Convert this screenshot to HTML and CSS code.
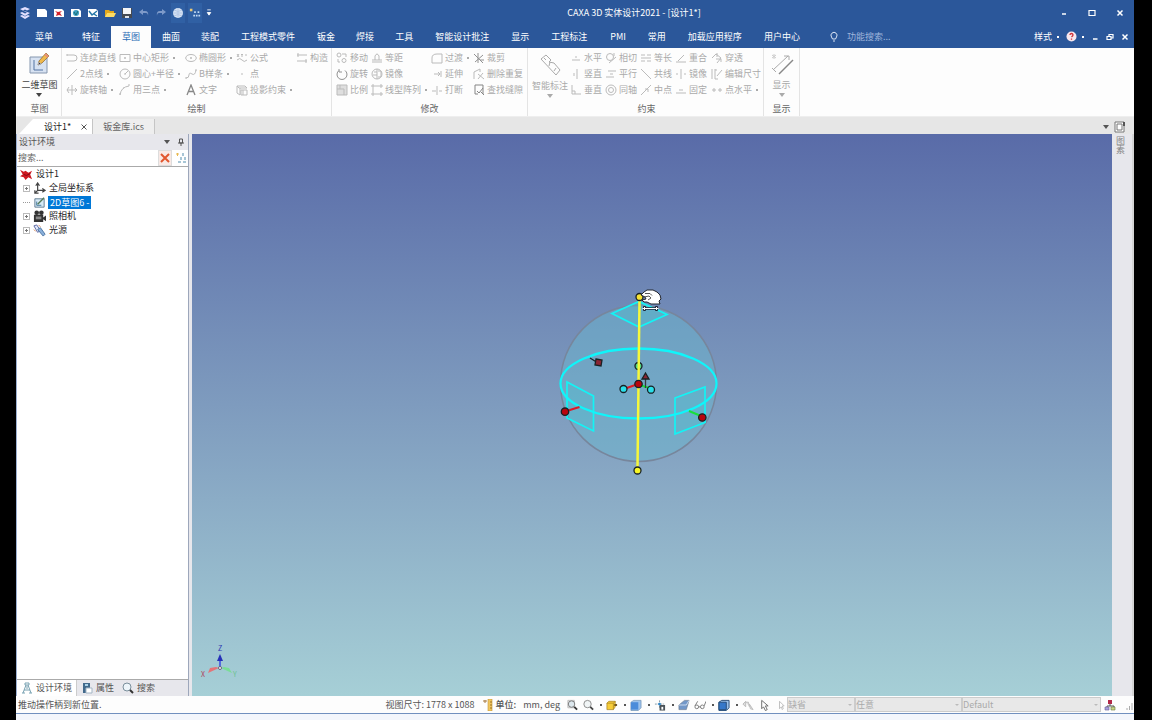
FILE: index.html
```html
<!DOCTYPE html>
<html lang="zh-CN">
<head>
<meta charset="utf-8">
<title>CAXA 3D 实体设计2021 - [设计1*]</title>
<link rel="stylesheet" href="styles.css">
</head>
<body>
<div class="app">
<header class="titlebar">
  <div class="quick">
    <svg class="logo" viewBox="0 0 12 14"><path d="M1 3l5-2 5 2-3 1.500-2-1-2 1 7 2.500-5 3L1 7l2-1 3 1.500 2-.7zM1 10l2-1 3 1.500L9 9l2 1-5 3z" fill="#e4e0ff"/></svg>
    <button aria-label="新建"><svg viewBox="0 0 12 12"><path d="M1 2h8l2 2v6H1z" fill="#fff"/></svg></button>
    <button aria-label="新建设计"><svg viewBox="0 0 12 12"><path d="M1 2h8l2 2v6H1z" fill="#fff"/><path d="M2 4l3 1 4-1-2 2 2 3-3-1-3 1 1-3z" fill="#d3222a"/></svg></button>
    <button aria-label="新建装配"><svg viewBox="0 0 12 12"><path d="M1 2h8l2 2v6H1z" fill="#fff"/><circle cx="6" cy="6" r="3" fill="#3d9fc4"/><path d="M4 5l2 3 2-4" fill="none" stroke="#1b6f71"/></svg></button>
    <button aria-label="新建图纸"><svg viewBox="0 0 12 12"><path d="M1 2h8l2 2v6H1z" fill="#fff"/><path d="M2 4l3 4 5-4M7 7l3 2" fill="none" stroke="#2678a8" stroke-width="1.500"/></svg></button>
    <button aria-label="打开"><svg viewBox="0 0 12 12"><path d="M1 3h4l1 1h4v2H3l-1 4H1z" fill="#e5a91c"/><path d="M3 6h9l-2 4H1z" fill="#ffdc63"/></svg></button>
    <button aria-label="保存"><svg viewBox="0 0 12 12"><path d="M1 1h10v10H1z" fill="#454a52"/><path d="M2 1h8v6H2z" fill="#f4f5f7"/><path d="M4 9h4v2H4z" fill="#dfe3e8"/></svg></button>
    <button aria-label="撤销"><svg viewBox="0 0 12 12"><path d="M5 2L1 5l4 3V6h3q2 0 2 3 1-5-3-5H5z" fill="#7e9ac9"/></svg></button>
    <button aria-label="重做"><svg viewBox="0 0 12 12"><path d="M7 2l4 3-4 3V6H4Q2 6 2 9 1 4 5 4h2z" fill="#7e9ac9"/></svg></button>
    <button class="lit" aria-label="三维球"><svg viewBox="0 0 12 12"><circle cx="6" cy="6" r="5" fill="#d7e3f4"/><path d="M1 6h10M6 1v10M2 3q4 3 8 0M2 9q4-3 8 0" stroke="#b4c8e6" fill="none"/></svg></button>
    <button class="lit" aria-label="设计树"><svg viewBox="0 0 14 14"><path d="M1 2h3v3H1z" fill="#edc873"/><path d="M6 5h2v2H6zM10 5h2v2h-2zM5 9h2v2H5zM8 9h2v2H8zM11 9h2v2h-2z" fill="#c3dbf4"/></svg></button>
    <button class="tiny" aria-label="自定义"><svg viewBox="0 0 6 8"><path d="M1 1h4M1 4h4L3 7z" stroke="#fff" fill="#fff"/></svg></button>
  </div>
  <h1>CAXA 3D 实体设计2021 - [设计1*]</h1>
  <div class="winbtns">
    <button aria-label="最小化"><svg viewBox="0 0 8 8"><path d="M2 5h4" stroke="#fff" stroke-width="1.500"/></svg></button>
    <button aria-label="最大化"><svg viewBox="0 0 8 8"><path d="M1 1.500h6v5H1z" fill="none" stroke="#fff" stroke-width="1.200"/></svg></button>
    <button aria-label="关闭"><svg viewBox="0 0 8 8"><path d="M1.500 1.500l5 5m0-5l-5 5" stroke="#fff" stroke-width="1.500"/></svg></button>
  </div>
</header>
<nav class="menubar">
  <div class="menus">
  <button>菜单</button><button>特征</button><button class="on">草图</button><button>曲面</button><button>装配</button><button class="wide">工程模式零件</button><button>钣金</button><button>焊接</button><button>工具</button><button class="wide">智能设计批注</button><button>显示</button><button class="wide">工程标注</button><button class="wide">PMI</button><button>常用</button><button class="wide">加载应用程序</button><button>用户中心</button>
  </div>
  <label class="find"><svg viewBox="0 0 8 12"><path d="M2.500 8Q2 7 1.500 6a3 3 0 1 1 5 0Q6 7 5.500 8zM3 10h2" fill="none" stroke="#dbe5f5"/></svg><input aria-label="功能搜索" placeholder="功能搜索..."></label>
  <div class="docbtns">
    <button class="style">样式<i class="dot"></i></button>
    <button aria-label="帮助"><svg class="help" viewBox="0 0 11 11"><circle cx="5.500" cy="5.500" r="5" fill="#f8e8ee"/><path d="M4 4q0-1.500 1.500-1.500T7 4q0 .8-1.500 2M5.500 7.500v1.200" fill="none" stroke="#d03138" stroke-width="1.300"/></svg><i class="dot"></i></button>
    <button aria-label="最小化文档"><svg viewBox="0 0 8 8"><path d="M2 6h4.500" stroke="#fff" stroke-width="1.500"/></svg></button>
    <button aria-label="还原文档"><svg viewBox="0 0 8 8"><path d="M3 3V1.500h4V5H5.500M1 3.500h4v3H1z" fill="none" stroke="#fff" stroke-width="1.200"/></svg></button>
    <button aria-label="关闭文档"><svg viewBox="0 0 8 8"><path d="M1.500 1.500l5 5m0-5l-5 5" stroke="#fff" stroke-width="1.500"/></svg></button>
  </div>
</nav>
<section class="ribbon">
  <div class="group g-sketch">
    <button class="big live"><svg viewBox="0 0 22 24"><path d="M2 5h17v16H2z" fill="#d7e2f2" stroke="#8596ae"/><path d="M6 8v10h9" fill="none" stroke="#5475a3"/><path d="M10 13l1-4 7-8 3 3-7 7z" fill="#efb94d" stroke="#8d6429" stroke-width=".7"/><path d="M17 2l3 3" stroke="#e68e7d" stroke-width="2"/><path d="M10 13l1-3 2 2z" fill="#433"/></svg>二维草图<i class="arrow"></i></button>
    <h2>草图</h2>
  </div>
  <div class="group">
    <div class="tools t-draw">
      <button><svg viewBox="0 0 12 12"><path d="M1 3h7q3 0 3 3t-3 3H1M1 2v2"/></svg>连续直线</button>
      <button><svg viewBox="0 0 12 12"><path d="M1 2.500h10v7H1zM6 5v2M5 6h2"/></svg>中心矩形<i class="dot"></i></button>
      <button><svg viewBox="0 0 12 12"><ellipse cx="6" cy="6" rx="5.300" ry="3.500"/><path d="M6 5v2M5 6h2"/></svg>椭圆形<i class="dot"></i></button>
      <button><svg viewBox="0 0 12 12"><path d="M1 2l2 3M3 2L1 5M5 2l1 1 1-1M6 3v2M9 3h2M1 8q3-3 5 0t5 0"/></svg>公式</button>
      <button><svg viewBox="0 0 12 12"><path d="M1 3h10M1 9h10M2 1v4M10 7v4"/></svg>构造</button>
      <button><svg viewBox="0 0 12 12"><path d="M1 11L11 1"/></svg>2点线<i class="dot"></i></button>
      <button><svg viewBox="0 0 12 12"><circle cx="6" cy="6" r="5"/><path d="M6 6l3-3M5 6h2"/></svg>圆心+半径<i class="dot"></i></button>
      <button><svg viewBox="0 0 12 12"><path d="M1 10q3 0 3-3t3-1 4-4M1 9v2M10 2h2"/></svg>B样条<i class="dot"></i></button>
      <button><svg viewBox="0 0 12 12"><path d="M5 6h2"/></svg>点</button>
      <span></span>
      <button><svg viewBox="0 0 12 12"><path d="M6 1v10M1 6h10M3 3L1 6l2 3M9 4l2 2-2 2"/></svg>旋转轴<i class="dot"></i></button>
      <button><svg viewBox="0 0 12 12"><path d="M1 11Q2 3 10 2M1 9v2M9 1h2M4 4h1"/></svg>用三点<i class="dot"></i></button>
      <button><svg viewBox="0 0 12 12"><path d="M2 11L6 1l4 10M3.500 7.500h5" stroke="#888" stroke-width="1.300"/></svg>文字</button>
      <button><svg viewBox="0 0 12 12"><path d="M1 2h8l2 2H3L1 2v7l3 2V4M5 6h6v5H5zM7 6v5" /></svg>投影约束<i class="dot"></i></button>
    </div>
    <h2>绘制</h2>
  </div>
  <div class="group">
    <div class="tools t-mod">
      <button><svg viewBox="0 0 12 12"><circle cx="3" cy="3" r="2"/><circle cx="8" cy="8.500" r="2"/><path d="M6 2h4v3M2 7v3h2"/></svg>移动</button>
      <button><svg viewBox="0 0 12 12"><path d="M1 10h10M1 8h3V4q2-4 4 0v4h3M4 8h4"/></svg>等距</button>
      <button><svg viewBox="0 0 12 12"><path d="M1 11V6q0-4 5-4h5v9z"/></svg>过渡<i class="dot"></i></button>
      <button><svg viewBox="0 0 12 12"><path d="M5 1v10M1 2l9 9M10 3L2 10M7 8h4" stroke="#929292"/></svg>裁剪</button>
      <button><svg viewBox="0 0 12 12"><path d="M3 2.500a5 5 0 1 0 6 0M3 1v3h3" stroke="#929292"/></svg>旋转</button>
      <button><svg viewBox="0 0 12 12"><circle cx="6" cy="6" r="5"/><path d="M6 1v10M3 4h3M2 7h4M7 3h3v6H7"/></svg>镜像</button>
      <button><svg viewBox="0 0 12 12"><path d="M3 6h6M7 4l2 2-2 2M10 3v6"/></svg>延伸</button>
      <button><svg viewBox="0 0 12 12"><path d="M1 11V4l6-3v3M5 6l6 5M10 5l-5 6"/></svg>删除重复</button>
      <button><svg viewBox="0 0 12 12"><path d="M1 1h10v10H1zM1 5h7v6M4 1v4" fill="#dedede"/></svg>比例</button>
      <button><svg viewBox="0 0 12 12"><path d="M1 1h2v2H1zM9 1h2v2H9zM1 9h2v2H1zM9 9h2v2H9zM4 2h4M2 4v4M4 10h4"/></svg>线型阵列<i class="dot"></i></button>
      <button><svg viewBox="0 0 12 12"><path d="M1 7h4M8 7h3M6 2v9"/></svg>打断</button>
      <button><svg viewBox="0 0 12 12"><path d="M2 10V1h8v9M2 10h3M4 7l2 2 4-5M8 8l3 3" stroke="#858585"/></svg>查找缝隙</button>
    </div>
    <h2>修改</h2>
  </div>
  <div class="group g-con">
    <div class="pair">
    <button class="big"><svg viewBox="0 0 24 24"><path d="M3 6l5-4 5 5-2 2 5 1 6 7-4 5L3 6zM6 5l2 2M12 9l-1 4M16 18l2-3"/></svg>智能标注<i class="arrow"></i></button>
    <div class="tools t-con">
      <button><svg viewBox="0 0 12 12"><path d="M2 8h8M5 5h2"/></svg>水平</button>
      <button><svg viewBox="0 0 12 12"><circle cx="5" cy="5" r="3.500"/><path d="M4 11l7-6M9 1v3"/></svg>相切</button>
      <button><svg viewBox="0 0 12 12"><path d="M1 3h4M7 3h4M1 6h10M1 9h4M7 9h4"/></svg>等长</button>
      <button><svg viewBox="0 0 12 12"><path d="M1 10h10M3 9l6-6"/></svg>重合</button>
      <button><svg viewBox="0 0 12 12"><path d="M1 6l4-4 5 4-4 5M6 1v4M5 7h5v3"/></svg>穿透</button>
      <button><svg viewBox="0 0 12 12"><path d="M7 1v10M4 5v3"/></svg>竖直</button>
      <button><svg viewBox="0 0 12 12"><path d="M3 3h8M1 9h8M5 6h3"/></svg>平行</button>
      <button><svg viewBox="0 0 12 12"><path d="M1 1l10 10"/></svg>共线</button>
      <button><svg viewBox="0 0 12 12"><path d="M6 1v10M2 5v2M10 5v2"/></svg>镜像</button>
      <button><svg viewBox="0 0 12 12"><path d="M1 1v10M4 1v10h3M6 8l5-6M6 2H4"/></svg>编辑尺寸</button>
      <button><svg viewBox="0 0 12 12"><path d="M2 1v9h9M2 7h3v3"/></svg>垂直</button>
      <button><svg viewBox="0 0 12 12"><circle cx="6" cy="6" r="5"/><circle cx="6" cy="6" r="2.500"/></svg>同轴</button>
      <button><svg viewBox="0 0 12 12"><path d="M1 11L11 1M5 5h3v3"/></svg>中点</button>
      <button><svg viewBox="0 0 12 12"><path d="M1 9h10M4 6h4"/></svg>固定</button>
      <button><svg viewBox="0 0 12 12"><path d="M1 6h4M7 6h4M3 4v4M9 4v4"/></svg>点水平<i class="dot"></i></button>
    </div>
    </div>
    <h2>约束</h2>
  </div>
  <div class="group g-show">
    <button class="big"><svg viewBox="0 0 24 24"><path d="M3 18L18 4M14 4h5v4M2 16l4 4" /><path d="M9 22L23 8" stroke="#888" stroke-width="1.500"/><path d="M4 2v5M2 3l4 3M6 3L2 6" stroke="#ccc"/></svg>显示<i class="arrow"></i></button>
    <h2>显示</h2>
  </div>
</section>
<div class="doctabs">
  <button class="doc on">设计1*<svg viewBox="0 0 8 8"><path d="M1.500 1.500l5 5m0-5l-5 5" stroke="#555"/></svg></button>
  <button class="doc">钣金库.ics</button>
  <button class="more" aria-label="文档列表"><i class="arrow"></i></button>
</div>
<main class="work">
  <aside class="side">
    <div class="panelhead"><h3>设计环境</h3><i class="arrow"></i><svg viewBox="0 0 8 8"><path d="M2.500 1h3v4h-3zM1 5h6M4 5v3" fill="none" stroke="#555"/></svg></div>
    <div class="search"><input aria-label="搜索设计树" placeholder="搜索..."><button class="clear" aria-label="清除"><svg viewBox="0 0 12 12"><path d="M2 2l8 8M10 2L2 10" stroke="#e2572e" stroke-width="2"/></svg></button><button aria-label="筛选"><svg viewBox="0 0 12 12"><path d="M1 2h3M2.500 1v3" stroke="#e9b950"/><path d="M7 1h2v3H7zM5 5h2v3H5zM9 5h2v3H9zM3 9h3v2H3zM8 9h3v2H8z" fill="#a8c6d6"/></svg></button></div>
    <ul class="tree">
      <li class="root"><svg viewBox="0 0 14 12"><path d="M0 1l4 2 2-1 3 2 4-2-2 4 2 5-4-2-3 3-2-3-4-1 3-2z" fill="#cf1820"/><path d="M4 6l3 1 4-2" stroke="#7d0710" fill="none"/></svg><span>设计1</span></li>
      <li><i class="plus"></i><svg viewBox="0 0 14 14"><path d="M5 10V2M3 4l2-3 2 3M5 9h7M10 7l3 2-3 2M5 9l-3 3M2 9v3h4" fill="none" stroke="#444" stroke-width="1.300"/></svg><span>全局坐标系</span></li>
      <li><i class="leaf"></i><svg viewBox="0 0 14 14"><path d="M2 3h10v9H2z" fill="#d7eaf6" stroke="#5e7990"/><path d="M4 6v4h5" fill="none" stroke="#3f7599"/><path d="M5 9l7-7" stroke="#557b59" stroke-width="1.500"/></svg><span class="sel">2D草图6 -</span></li>
      <li><i class="plus"></i><svg viewBox="0 0 14 14"><circle cx="4" cy="3" r="2.500" fill="#333"/><circle cx="9" cy="3" r="2.500" fill="#333"/><path d="M1 5h10v8H1zM11 8l3-2v6l-3-2z" fill="#333"/><path d="M3 7h6v3H3z" fill="#888"/></svg><span>照相机</span></li>
      <li><i class="plus"></i><svg viewBox="0 0 14 14"><path d="M1 2l3-1 4 6-3 2z" fill="#e4eafb" stroke="#5865a0"/><path d="M5 6l3-2 5 7-2 2z" fill="#8ab0db" stroke="#4873a1"/><path d="M1 6l2 2M6 1l2 2" stroke="#d68655"/></svg><span>光源</span></li>
    </ul>
    <div class="sidetabs">
      <button class="on"><svg viewBox="0 0 12 12"><path d="M4 1h4v2H4zM5 3L2 11M7 3l3 8M3 8h6M1 11h3M8 11h3M6 4v3" fill="none" stroke="#78a2b2"/></svg>设计环境</button>
      <button><svg viewBox="0 0 12 12"><path d="M2 1h7v10H2z" fill="#41698b"/><path d="M4 2h3v2H4z" fill="#a9d1e8"/><path d="M5 6h6v5H5z" fill="#fff" stroke="#a3b5c4"/></svg>属性</button>
      <button><svg viewBox="0 0 12 12"><circle cx="5" cy="5" r="4" fill="#edf5fa" stroke="#7b8f9c"/><path d="M8 8l3 3" stroke="#333" stroke-width="2"/></svg>搜索</button>
    </div>
  </aside>
  <div class="view">
    <svg viewBox="192 134 920 562" role="img" aria-label="三维视图">
      <circle cx="638.500" cy="383.500" r="78" fill="#6ab5ce" fill-opacity=".5" stroke="#77869c" stroke-width="1.500"/>
      <g fill="#50bfd0" fill-opacity=".4" stroke="#12f4f5" stroke-width="1.700">
        <path d="M612 313.500l27-12 28 13-28 12.500zM567 382l26.500 14V431L567 418zM675 398l30-11v35.500L675 434z"/>
      </g>
      <ellipse cx="638.500" cy="383.500" rx="78" ry="35" fill="none" stroke="#0ff5fa" stroke-width="2.300"/>
      <g stroke-width="1.300" stroke="#182124">
        <circle cx="638.500" cy="366" r="3.500" fill="#54d783"/>
        <path d="M639.500 300l-2 167" stroke="#f6f83b" stroke-width="2.500"/>
        <path d="M624 389l14-5M565 411.500l14.500-4.500" stroke="#e01926" stroke-width="2"/>
        <path d="M689 411l12 5M640 385l9 3" stroke="#19e03a" stroke-width="2"/>
        <path d="M645.500 388v-10" stroke="#333940"/>
        <path d="M642 379l3.500-6 3.500 6z" fill="#8a2534"/>
        <path d="M590 358l8 5"/><path d="M596 359l6 1-1 6-6-1z" fill="#8a2534"/>
        <circle cx="623.500" cy="389" r="3.500" fill="#29dfe9"/><circle cx="651" cy="389.700" r="3.500" fill="#29dfe9"/>
        <circle cx="638.500" cy="384" r="3.700" fill="#b9040d"/><circle cx="565" cy="411.700" r="3.700" fill="#b9040d"/><circle cx="702.300" cy="417.500" r="3.700" fill="#b9040d"/>
        <circle cx="637.500" cy="470.500" r="3.500" fill="#f7f626"/><circle cx="639.500" cy="297" r="3.500" fill="#f7e334"/>
      </g>
      <path d="M641 295l3-3 3-2h6l4 2 3 3 1 4-2 2 1 3h-9l-4-2-3 0-2-2 4-1-1-2z" fill="#fff" stroke="#23262e"/>
      <path d="M645 293.500h5l2 2M644 297l5-1 2 2-3 2" fill="none" stroke="#555"/>
      <path d="M643 308.500h15M644.500 306v5M656.500 306v5" stroke="#223" stroke-width="2.500"/><path d="M642.500 308.500h16M644.500 307v3M656.500 307v3" stroke="#fff"/>
      <g class="axes"><path d="M220 667v-8" stroke="#5369df" stroke-width="2"/><path d="M217 661l3-7 3 7z" fill="#2630b8"/><path d="M219 668l-11 5 2-5 6-1z" fill="#e47478"/><path d="M221 668l11 5-3-5-5-1z" fill="#7add96"/><circle cx="220" cy="668" r="1.500" fill="#fff" stroke="#667"/><text x="218" y="651" fill="#3038b0">Z</text><text x="201" y="677" fill="#b04860">X</text><text x="233" y="677" fill="#6cc292">Y</text></g>
    </svg>
  </div>
  <aside class="rail"><button><svg viewBox="0 0 12 12"><path d="M1 1h9v10H1zM3 3h5v6H3z" fill="#fff" stroke="#777"/><path d="M10 1v4" stroke="#555" stroke-width="2"/></svg><span>图素</span></button></aside>
</main>
<footer class="status">
  <p>推动操作柄到新位置.</p>
  <div class="stat">
    <span class="size">视图尺寸: 1778 x 1088</span>
    <svg viewBox="0 0 12 12"><path d="M6 0h4v12H6z" fill="#f1c65d" stroke="#c29335" stroke-width=".6"/><path d="M1 2h4M3 1v3" stroke="#a87b43"/><path d="M8 3h2M8 6h2M8 9h2" stroke="#9b7025"/></svg>
    <b>单位:</b><span class="unit">mm, deg</span>
    <button aria-label="缩放窗口"><svg viewBox="0 0 13 12"><path d="M2 1h7v8H2z" fill="#eee" stroke="#bbb"/><circle cx="6" cy="5" r="3.500" fill="#dce7ed" stroke="#777"/><path d="M9 8l3 3" stroke="#333" stroke-width="2"/></svg></button>
    <button aria-label="缩放"><svg viewBox="0 0 13 12"><circle cx="6" cy="5" r="4" fill="#f1f5f6" stroke="#888"/><path d="M9 8l3 3" stroke="#444" stroke-width="2"/></svg><i class="dot"></i></button>
    <button aria-label="视向"><svg viewBox="0 0 13 12"><path d="M1 4l2-2h7v6l-2 3H1z" fill="#f7ce3a" stroke="#a98420" stroke-width=".8"/><path d="M1 4h7v7M8 4l2-2" fill="none" stroke="#a98420" stroke-width=".8"/><path d="M9 6h3" stroke="#684d19" stroke-width="2"/></svg><i class="dot"></i></button>
    <button aria-label="投影"><svg viewBox="0 0 13 12"><path d="M1 3l3-2h8v8l-3 3H1z" fill="#9dc3ec" stroke="#678bae" stroke-width=".7"/><path d="M1 3h8v8H1z" fill="#4b8cda"/></svg><i class="dot"></i></button>
    <button aria-label="相机"><svg viewBox="0 0 13 12"><path d="M6 1v9M1 5h10" stroke="#7e939e" stroke-dasharray="2 1"/><path d="M6 6h6v6H6z" fill="#4b5359"/><path d="M8 8h2v3H8z" fill="#fff"/><circle cx="6" cy="5" r="1.500" fill="#2c87cc"/></svg><i class="dot"></i></button>
    <button aria-label="渲染"><svg viewBox="0 0 13 12"><path d="M1 11V6l6-5h5L9 11z" fill="#7398c9" stroke="#6a778d" stroke-width=".7"/><path d="M1 6h8l3-5" fill="none" stroke="#d4e0ef"/></svg></button>
    <button aria-label="可见性"><svg viewBox="0 0 13 12"><circle cx="3" cy="8" r="2" fill="none" stroke="#777"/><circle cx="9" cy="8" r="2" fill="none" stroke="#777"/><path d="M1 7l3-5M11 7l2-5M5 8h2" fill="none" stroke="#777"/></svg><i class="dot"></i></button>
    <button aria-label="显示样式"><svg viewBox="0 0 13 12"><path d="M1 3l3-2h8v8l-3 3H1z" fill="#9dc3ec" stroke="#234a75"/><path d="M1 3h8v8H1z" fill="#3678c9" stroke="#234a75"/></svg><i class="dot"></i></button>
    <button aria-label="拾取"><svg viewBox="0 0 13 12"><path d="M1 5l3-3v6zM4 3h3l1 5M8 5l4 6-3-1z" fill="#ddd" stroke="#bbb"/></svg></button>
    <button aria-label="选择"><svg viewBox="0 0 13 12"><path d="M4 1v9l2-2 2 4 2-1-2-4h3z" fill="#fff" stroke="#666"/></svg></button>
    <button aria-label="过滤"><svg viewBox="0 0 13 12"><path d="M6 2v8l2-2 1 3 1-1-1-3h2z" fill="#fff" stroke="#bbb"/></svg></button>
  </div>
  <div class="picks">
    <span class="pick p-a"><select disabled aria-label="拾取过滤"><option>缺省</option></select></span><span class="pick p-b"><select disabled aria-label="拾取类型"><option>任意</option></select></span><span class="pick p-c"><select disabled aria-label="配置"><option>Default</option></select></span>
    <svg viewBox="0 0 12 12"><path d="M4 1h4v4H4z" fill="#b32948"/><path d="M6 5v2M3 8V7h7v1" fill="none" stroke="#555"/><path d="M1 8h4v3H1z" fill="#a9a1dc" stroke="#655c99" stroke-width=".6"/><path d="M7 8h4v3H7z" fill="#c9d586" stroke="#687b42" stroke-width=".6"/></svg>
    <svg class="grip" viewBox="0 0 12 12"><path d="M5 9v2M7.500 7v4M10 4v7" stroke="#aaa"/></svg>
  </div>
</footer>
</div>
</body>
</html>
```
FILE: styles.css
```css
* { box-sizing: border-box; }
body, h1, h2, h3, p, ul { margin: 0; padding: 0; }
body {
  background: #000;
  padding: 0 18px 0 16px;
  font: 9px/14px "Noto Sans CJK SC", sans-serif;
  color: #444;
}
h1, h2, h3 { font-size: 9px; font-weight: 400; }
button, input, select {
  font: inherit;
  color: inherit;
  border: 0;
  padding: 0;
  margin: 0;
  background: none;
  white-space: nowrap;
}
button { display: flex; align-items: center; justify-content: center; }
svg { width: 12px; height: 12px; flex: none; }
.app { min-height: 100vh; display: flex; flex-direction: column; background: #f3f6fc; }

.dot { width: 2px; height: 2px; background: currentColor; margin-left: 5px; flex: none; }
.arrow { border: 3px solid transparent; border-top: 4px solid #555; border-bottom: 0; flex: none; }

.titlebar { position: relative; display: flex; align-items: center; justify-content: space-between; height: 25px; background: #2b579a; color: #fff; }
.quick { display: flex; align-items: center; gap: 5px; padding-left: 3px; }
.quick .logo { height: 14px; }
.quick .lit { background: #3060a4; height: 20px; margin: 0 -1px; padding: 0 1px; }
.quick .tiny svg { width: 6px; height: 7px; }
.titlebar h1 { position: absolute; left: 50%; top: 6px; transform: translateX(-50%); padding-left: 118px; white-space: nowrap; }
.winbtns { display: flex; gap: 20px; padding-right: 10px; height: 20px; align-items: center; }
.winbtns svg, .docbtns svg { width: 8px; height: 8px; }

.menubar { display: flex; align-items: stretch; height: 23px; background: #2b579a; color: #fff; }
.menus { display: flex; gap: 1px; padding-left: 9px; }
.menus button { padding: 0 10px; }
.menus .wide { padding: 0 11px; }
.menus button:first-child { margin-right: 8px; }
.menus .on { background: #fdfdfd; color: #2b6cb5; padding: 0 11px; margin-top: 1px; }
.find { display: flex; align-items: center; margin-left: 20px; gap: 9px; flex: 1; }
.find svg { width: 8px; }
.find input { width: 70px; }
.find input::placeholder { color: #9fb5db; opacity: 1; }
.docbtns { display: flex; align-items: center; gap: 7px; padding-right: 5px; }
.docbtns .help { width: 11px; height: 11px; }

.ribbon { display: flex; height: 69px; background: #fdfdfd; border-bottom: 1px solid #eee; }
.group { display: flex; flex-direction: column; justify-content: space-between; align-items: center; padding: 2px 4px 1px; border-right: 1px solid #e4e4e4; color: #aaa; }
.group h2 { color: #666; line-height: 13px; }
.g-sketch { width: 46px; padding-left: 2px; padding-right: 0; }
.g-con { padding-right: 2px; }
.g-show { width: 36px; }
.big { flex-direction: column; line-height: 13px; gap: 2px; padding-top: 2px; }
.big svg { width: 24px; height: 24px; fill: none; stroke: #aaa; }
.big .arrow { border-top-color: #aaa; }
.big.live { color: #444; }
.big.live .arrow { border-top-color: #444; }
.pair { display: flex; gap: 2px; }
.tools { display: grid; grid-auto-rows: 16px; }
.tools button { justify-content: flex-start; gap: 2px; }
.tools svg { fill: none; stroke: #bbb; }
.tools .dot { margin-left: 2px; }
.t-draw { grid-template-columns: 53px 66px 51px 60px 31px; }
.t-mod { grid-template-columns: 35px 60px 42px 50px; }
.t-con { grid-template-columns: 35px 35px 35px 36px 50px; }

.doctabs { display: flex; height: 17px; background: #e6e6e6; padding: 2px 4px 0 3px; }
.doc { padding: 0 10px; background: #eee; border-right: 1px solid #c5c5c5; color: #666; }
.doc.on { padding: 0 4px 0 25px; background: #fff; color: #222; clip-path: polygon(0 100%, 14px 0, 100% 0, 100% 100%); gap: 9px; }
.doc svg { width: 8px; height: 8px; }
.more { margin-left: auto; padding-right: 21px; }

.work { flex: 1; display: flex; min-height: 0; background: #e7e7ec; }
.side { width: 173px; margin-right: 3px; display: flex; flex-direction: column; border-left: 1px solid #9cb0d2; border-right: 1px solid #9da7bb; }
.panelhead { display: flex; align-items: center; gap: 7px; height: 16px; padding: 0 3px 0 2px; color: #555; }
.panelhead h3 { flex: 1; }
.panelhead svg { width: 8px; height: 8px; }
.search { display: flex; height: 17px; background: #fff; gap: 2px; border-bottom: 1px solid #aaa; }
.search input { flex: 1; min-width: 0; padding-left: 1px; }
.search input::placeholder { color: #666; opacity: 1; }
.search button { width: 14px; }
.search .clear { background: #f9e9e5; border: 1px solid #ddd; }
.search svg { width: 12px; height: 12px; }
.tree { flex: 1; list-style: none; background: #fff; color: #222; border-bottom: 1px solid #aaa; }
.tree li { display: flex; align-items: center; gap: 3px; height: 14px; padding-left: 6px; }
.tree .root { padding-left: 3px; }
.tree svg { width: 13px; height: 13px; }
.plus { width: 7px; height: 7px; border: 1px solid #bbb; background: linear-gradient(#777, #777) center / 3px 1px no-repeat, linear-gradient(#777, #777) center / 1px 3px no-repeat; }
.leaf { width: 7px; border-top: 1px dotted #999; }
.sel { background: #0078d7; color: #fff; line-height: 13px; padding: 0 2px; margin-left: -1px; }
.sidetabs { display: flex; height: 16px; color: #555; }
.sidetabs button { padding: 0 4px; gap: 3px; }
.sidetabs .on { background: #fff; border-right: 1px solid #ccc; }

.view { flex: 1; min-width: 0; background: linear-gradient(#596ba8, #a6cfd6); display: flex; }
.view svg { width: 100%; height: 100%; }
.axes { font-size: 7px; }
.rail { width: 22px; padding-right: 4px; border-right: 2px solid #d5d5d5; color: #888; }
.rail button { flex-direction: column; width: 100%; gap: 3px; margin-top: -13px; }
.rail span { writing-mode: vertical-rl; }

.status { display: flex; align-items: center; height: 18px; margin-bottom: 6px; background: #fdfdfd; border-bottom: 1px solid #7190bf; color: #555; }
.status p { flex: 1; padding-left: 2px; white-space: nowrap; }
.stat { display: flex; align-items: center; gap: 4px; }
.stat .dot { margin-left: 6px; }
.stat b { font-weight: 500; margin-left: -2px; }
.size { margin-right: 3px; }
.unit { margin: 0 2px 0 3px; white-space: nowrap; }
.picks { display: flex; align-items: center; margin-left: 1px; }
.pick { position: relative; height: 15px; border: 1px solid #ccc; background: #e8e8e8; color: #aaa; }
.pick::after { content: ""; position: absolute; right: 2px; top: 6px; border: 2px solid transparent; border-top-color: #bbb; }
.pick select { appearance: none; display: block; width: 100%; height: 13px; line-height: 13px; color: #aaa; opacity: 1; }
.p-a { width: 68px; }
.p-b { width: 107px; }
.p-c { width: 139px; }
.picks svg { margin-left: 3px; }
.picks .grip { margin-left: 6px; }
```
